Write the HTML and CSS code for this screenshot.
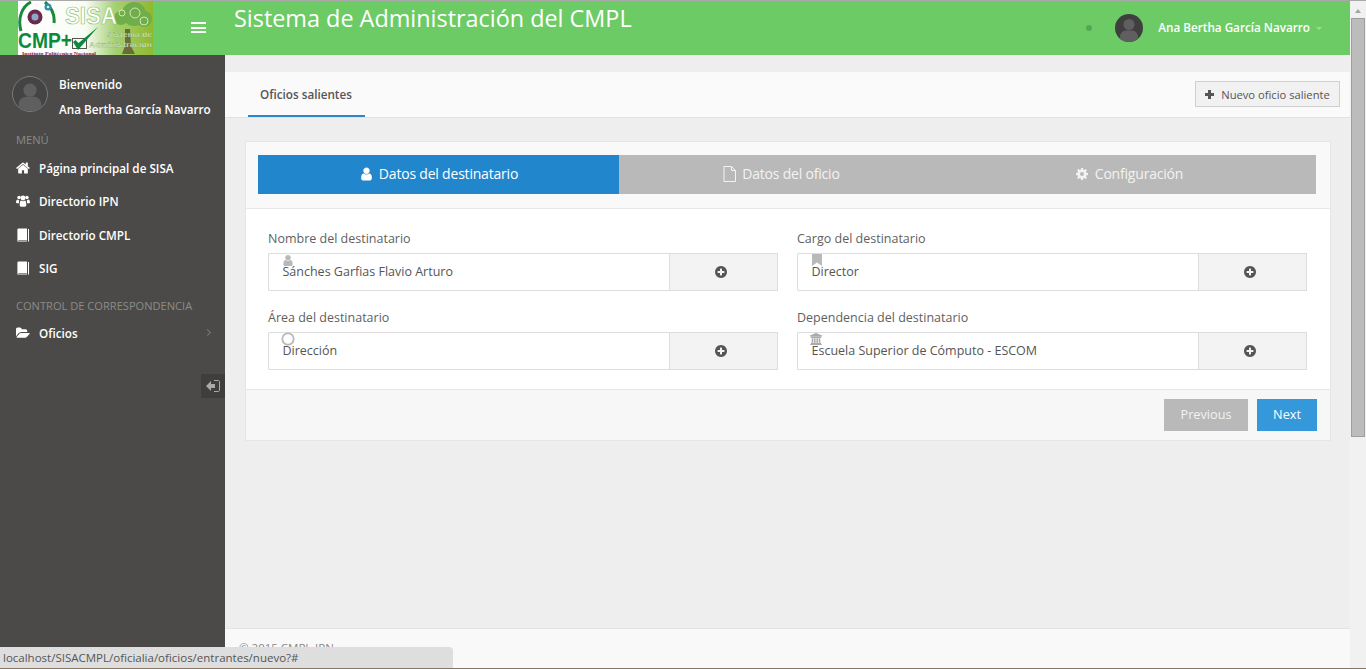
FILE: index.html
```html
<!DOCTYPE html>
<html lang="es">
<head>
<meta charset="utf-8">
<title>Sistema de Administración del CMPL</title>
<link rel="stylesheet" href="styles.css">
</head>
<body>
<svg class="defs" width="0" height="0" aria-hidden="true">
  <symbol id="i-user" viewBox="0 0 1792 1792"><path d="M1536 1399q0 109-62.500 187t-150.500 78h-854q-88 0-150.500-78t-62.500-187q0-85 8.500-160.500t31.500-152 58.500-131 94-89 134.500-34.500q131 128 313 128t313-128q76 0 134.500 34.500t94 89 58.500 131 31.500 152 8.500 160.500zm-256-887q0 159-112.500 271.500t-271.500 112.500-271.500-112.500-112.500-271.500 112.500-271.500 271.500-112.500 271.500 112.500 112.500 271.500z"/></symbol>
  <symbol id="i-home" viewBox="64 64 1664 1664"><path d="M1472 992v480q0 26-19 45t-45 19h-384v-384h-256v384h-384q-26 0-45-19t-19-45v-480q0-1 .5-3t.5-3l575-474 575 474q1 2 1 6zm223-69l-62 74q-8 9-21 11h-3q-13 0-21-7l-692-577-692 577q-12 8-24 7-13-2-21-11l-62-74q-8-10-7-23.500t11-21.500l719-599q32-26 76-26t76 26l244 204v-195q0-14 9-23t23-9h192q14 0 23 9t9 23v408l219 182q10 8 11 21.500t-7 23.500z"/></symbol>
  <symbol id="i-plusc" viewBox="0 0 1792 1792"><path d="M1344 960v-128q0-26-19-45t-45-19h-256v-256q0-26-19-45t-45-19h-128q-26 0-45 19t-19 45v256h-256q-26 0-45 19t-19 45v128q0 26 19 45t45 19h256v256q0 26 19 45t45 19h128q26 0 45-19t19-45v-256h256q26 0 45-19t19-45zm320-64q0 209-103 385.500t-279.500 279.500-385.500 103-385.500-103-279.500-279.500-103-385.500 103-385.500 279.500-279.500 385.500-103 385.500 103 279.500 279.500 103 385.500z"/></symbol>
  <symbol id="i-folder" viewBox="0 0 1920 1792"><path d="M1879 952q0 31-31 66l-336 396q-43 51-120.500 86.500t-143.500 35.500h-1088q-34 0-60.500-13t-26.500-43q0-31 31-66l336-396q43-51 120.500-86.500t143.500-35.500h1088q34 0 60.500 13t26.500 43zm-343-344v160h-832q-94 0-197 47.500t-164 119.500l-337 396-5 6q0-4-.5-12.500t-.5-12.500v-960q0-92 66-158t158-66h320q92 0 158 66t66 158v32h544q92 0 158 66t66 158z"/></symbol>
  <symbol id="i-book" viewBox="0 0 14 14"><path d="M2.500 .5H11V12H2.800C2.300 12 2 12.300 2 12.700v.8H1.400V2C1.400 1.100 1.800 .5 2.500 .5z"/><path d="M2 12.600h9v.9H2z"/><rect x="12" y="1" width="1" height="12.500"/></symbol>
  <symbol id="i-group" viewBox="0 0 16 14"><circle cx="3.500" cy="3" r="2"/><circle cx="12.500" cy="3" r="2"/><circle cx="8" cy="3.600" r="2.800"/><path d="M0 9c0-3 1-3.800 2-3.800.6.600 1 .8 1.600.9C3.400 7 3.300 8 3.500 9.500H1C.4 9.500 0 9.400 0 9zM16 9c0-3-1-3.800-2-3.800-.6.600-1 .8-1.600.9.200.9.300 1.900.1 3.400H15c.6 0 1-.1 1-.5zM4.200 11.500C4.200 8 5 6.500 5.800 6.500c1.300 1.100 3.100 1.100 4.400 0 .8 0 1.600 1.500 1.600 5 0 1.200-.8 2-1.800 2H6c-1 0-1.800-.8-1.800-2z"/></symbol>
  <symbol id="i-cog" viewBox="0 0 14 14"><path fill-rule="evenodd" d="M5.900 0h2.200l.4 1.900 1.100.5L11.300 1.300l1.400 1.400-1.100 1.700.5 1.100 1.900.4v2.200l-1.900.4-.5 1.100 1.100 1.700-1.400 1.400-1.700-1.100-1.100.5-.4 1.900H5.900l-.4-1.900-1.100-.5-1.700 1.100-1.400-1.400 1.100-1.700-.5-1.100L0 8.100V5.900l1.900-.4.5-1.100-1.100-1.700 1.400-1.400 1.700 1.100 1.100-.5zM7 4.700a2.300 2.300 0 1 0 0 4.600 2.300 2.300 0 0 0 0-4.600z"/></symbol>
  <symbol id="i-bank" viewBox="0 0 14 14"><path d="M7 0l7 3v1H0V3zM1 4.500h12v1.200H1zM2 6h1.800v5H2zM4.700 6h1.800v5H4.700zM7.500 6h1.800v5H7.500zM10.200 6H12v5h-1.800zM1 11.300h12V13H1zM0 13h14v1H0z"/></symbol>
</svg>

<div class="window">
  <div class="viewport">
    <header class="topbar">
      <div class="logo">
        <svg width="135" height="54" viewBox="0 0 135 54">
          <defs>
            <linearGradient id="lg" x1="0" x2="1" y1="0" y2="0">
              <stop offset="0" stop-color="#ffffff"/>
              <stop offset=".5" stop-color="#f8fcf5"/>
              <stop offset=".72" stop-color="#a4d072"/>
              <stop offset="1" stop-color="#8fb92e"/>
            </linearGradient>
          </defs>
          <rect width="135" height="54" fill="url(#lg)"/>
          <path d="M3 30C-1 16 5 5 13 1M36 22c1-9-3-16-9-21" fill="none" stroke="#1a8a3a" stroke-width="3"/>
          <circle cx="17" cy="16" r="7.500" fill="#6b2a4c"/>
          <circle cx="17" cy="16" r="3.500" fill="#8fa6c4"/>
          <circle cx="30" cy="6" r="3.500" fill="#2d8ea8"/>
          <circle cx="30" cy="6" r="1.300" fill="#dfeef2"/>
          <g fill="#6fae4a"><circle cx="116" cy="13" r="12"/><circle cx="126" cy="18" r="8"/><circle cx="103" cy="17" r="7"/></g>
          <g fill="none" stroke="#cfe8b6"><circle cx="117" cy="12" r="5"/><circle cx="126" cy="20" r="4"/><circle cx="104" cy="12" r="3"/></g>
          <path d="M107 28h5l1 17 4 8h-13l3-8z" fill="#6b6a3a"/>
          <text class="logo-sisa" x="47" y="23" textLength="52" lengthAdjust="spacingAndGlyphs">SISA</text>
          <text class="logo-sub" x="89" y="36" textLength="45" lengthAdjust="spacing">Sistema de</text>
          <text class="logo-sub" x="71" y="46" textLength="63" lengthAdjust="spacing">Administración</text>
          <text class="logo-cmp" x="0" y="47" textLength="54" lengthAdjust="spacingAndGlyphs">CMP+</text>
          <rect x="54.500" y="37.500" width="14" height="10" fill="none" stroke="#555"/>
          <path d="M55 41l5 8L80 26 60.500 42l-3-3z" fill="#0b8a3c"/>
          <text class="logo-ipn" x="4" y="53.500" textLength="74" lengthAdjust="spacingAndGlyphs">Instituto Politécnico Nacional</text>
        </svg>
      </div>
      <button class="burger" aria-label="Menú"><span></span><span></span><span></span></button>
      <h1 class="title">Sistema de Administración del CMPL</h1>
      <div class="top-user">
        <span class="dot"></span>
        <span class="avatar avatar-top"><svg viewBox="0 0 28 28"><circle cx="14" cy="10.500" r="5.500"/><path d="M5 28v-5c0-4 3-6.500 6-6.500h6c3 0 6 2.500 6 6.500v5z"/></svg></span>
        <span class="top-name">Ana Bertha García Navarro</span>
        <span class="caret"></span>
      </div>
    </header>

    <div class="layout">
      <aside class="sidebar">
        <div class="profile">
          <span class="avatar avatar-side"><svg viewBox="0 0 36 36"><circle cx="18" cy="14" r="7"/><path d="M6 36v-7c0-5 4-8 8-8h8c4 0 8 3 8 8v7z"/></svg></span>
          <div class="profile-text">
            <div>Bienvenido</div>
            <div>Ana Bertha García Navarro</div>
          </div>
        </div>
        <div class="nav-head nav-head-first">MENÚ</div>
        <nav class="nav">
          <a class="nav-item"><svg class="nav-ico"><use href="#i-home"/></svg>Página principal de SISA</a>
          <a class="nav-item"><svg class="nav-ico"><use href="#i-group"/></svg>Directorio IPN</a>
          <a class="nav-item"><svg class="nav-ico"><use href="#i-book"/></svg>Directorio CMPL</a>
          <a class="nav-item"><svg class="nav-ico"><use href="#i-book"/></svg>SIG</a>
        </nav>
        <div class="nav-head nav-head-second">CONTROL DE CORRESPONDENCIA</div>
        <nav class="nav nav-second">
          <a class="nav-item"><svg class="nav-ico"><use href="#i-folder"/></svg>Oficios<span class="chev"></span></a>
        </nav>
        <button class="collapse" aria-label="Contraer">
          <svg width="14" height="12" viewBox="0 0 14 12"><path d="M0 6l5-5v3h4v4H5v3z" fill="#a9a9a9"/><path d="M8 .5h4c1 0 1.500.5 1.500 1.500v8c0 1-.5 1.500-1.500 1.500H8" fill="none" stroke="#a9a9a9"/></svg>
        </button>
      </aside>

      <main class="content">
        <div class="tabs">
          <div class="tab-active">Oficios salientes</div>
          <button class="btn-new"><span class="plus"></span>Nuevo oficio saliente</button>
        </div>

        <div class="page">
          <section class="card">
            <div class="card-head">
              <div class="steps">
                <div class="step step-on"><svg class="step-ico"><use href="#i-user"/></svg>Datos del destinatario</div>
                <div class="step">
                  <svg class="step-ico" viewBox="0 0 14 16"><path d="M1.500.5h7.500l4 4v11h-11.500zM9 .5v4h4" fill="none" stroke="#f3f3f3"/></svg>Datos del oficio
                </div>
                <div class="step step-last"><svg class="step-ico step-ico-cog"><use href="#i-cog"/></svg>Configuración</div>
              </div>
            </div>

            <div class="form">
              <div class="field">
                <label class="lbl">Nombre del destinatario</label>
                <div class="group">
                  <div class="control">
                    <svg class="f-ico"><use href="#i-user"/></svg>
                    Sánches Garfias Flavio Arturo
                  </div>
                  <div class="addon"><svg class="add-ico"><use href="#i-plusc"/></svg></div>
                </div>
              </div>
              <div class="field">
                <label class="lbl">Cargo del destinatario</label>
                <div class="group">
                  <div class="control">
                    <svg class="f-ico f-ico-mark" viewBox="0 0 10 12"><path d="M0 0h10v12L5 8.500 0 12z"/></svg>
                    Director
                  </div>
                  <div class="addon"><svg class="add-ico"><use href="#i-plusc"/></svg></div>
                </div>
              </div>
              <div class="field">
                <label class="lbl">Área del destinatario</label>
                <div class="group">
                  <div class="control">
                    <svg class="f-ico f-ico-ring" viewBox="0 0 14 14"><circle cx="7" cy="7" r="5.700" fill="none" stroke="#b9b9b9" stroke-width="1.800"/></svg>
                    Dirección
                  </div>
                  <div class="addon"><svg class="add-ico"><use href="#i-plusc"/></svg></div>
                </div>
              </div>
              <div class="field">
                <label class="lbl">Dependencia del destinatario</label>
                <div class="group">
                  <div class="control">
                    <svg class="f-ico f-ico-bank"><use href="#i-bank"/></svg>
                    Escuela Superior de Cómputo - ESCOM
                  </div>
                  <div class="addon"><svg class="add-ico"><use href="#i-plusc"/></svg></div>
                </div>
              </div>
            </div>

            <div class="card-foot">
              <button class="btn btn-prev">Previous</button>
              <button class="btn btn-next">Next</button>
            </div>
          </section>
        </div>

        <footer class="foot">© 2015 CMPL-IPN</footer>
      </main>
    </div>
    <div class="status">localhost/SISACMPL/oficialia/oficios/entrantes/nuevo?#</div>
  </div>

  <div class="scrollbar">
    <span class="sb-up"></span>
    <span class="sb-thumb"></span>
  </div>
</div>
</body>
</html>
```

FILE: styles.css
```css
* { box-sizing: border-box; }
html, body { margin: 0; padding: 0; height: 100%; overflow: hidden; }
body {
  font-family: "Open Sans", "Liberation Sans", sans-serif;
  font-size: 13px;
  color: #5a5a5a;
  background: #eeeeee;
  border-top: 1px solid #a9a9a9;
  border-bottom: 1px solid #8a7560;
}
button { font-family: inherit; cursor: pointer; }
.defs { position: absolute; }

.window { display: flex; height: 100%; }
.viewport { flex: 1; min-width: 0; display: flex; flex-direction: column; position: relative; }

/* top bar */
.topbar {
  height: 54px;
  flex: none;
  background: #6dcb66;
  display: flex;
  align-items: flex-start;
  color: #fff;
}
.logo { width: 135px; height: 54px; margin-left: 18px; flex: none; }
.logo svg { display: block; }
.logo-sisa { font: 700 23px "Liberation Sans", sans-serif; fill: #ffffff; stroke: #8cc66c; stroke-width: .7; }
.logo-sub { font: 700 8px "Liberation Sans", sans-serif; fill: #dcefc8; stroke: #6f9a4c; stroke-width: .25; }
.logo-cmp { font: 700 22px "Liberation Sans", sans-serif; fill: #0b8a3c; }
.logo-ipn { font: 700 4.800px "Liberation Serif", serif; fill: #7b2450; }

.burger {
  width: 15px; height: 11px; margin: 21px 0 0 38px;
  padding: 0; border: 0; background: none;
  display: flex; flex-direction: column; justify-content: space-between;
  flex: none;
}
.burger span { display: block; height: 2px; background: #fff; }

.title {
  margin: 1px 0 0 28px;
  font-size: 23.400px;
  font-weight: 400;
  line-height: 32px;
  color: #fff;
  white-space: nowrap;
}
.top-user { margin-left: auto; display: flex; align-items: center; height: 54px; }
.dot { width: 6px; height: 6px; border-radius: 50%; background: #55a852; margin-right: 23px; }
.avatar { display: block; border-radius: 50%; overflow: hidden; background: #3f3f3f; flex: none; }
.avatar svg { display: block; width: 100%; height: 100%; fill: #5f5f5f; }
.avatar-top { width: 28px; height: 28px; }
.top-name { font-size: 11.700px; font-weight: 600; color: #fff; margin: -3px 0 0 15px; }
.caret {
  width: 0; height: 0; margin: 1px 28px 0 6px;
  border: 3px solid transparent; border-top-color: #9adf95; border-bottom: 0;
}

/* body layout */
.layout { flex: 1; display: flex; min-height: 0; }
.sidebar { width: 225px; flex: none; background: #4b4a48; position: relative; padding-top: 21px; }
.profile { display: flex; padding-left: 12px; height: 42px; }
.avatar-side { width: 36px; height: 36px; background: #444; border: 1px solid #7a7a7a; }
.profile-text { margin-left: 11px; font-size: 11.700px; font-weight: 600; color: #fff; line-height: 25px; margin-top: -4px; white-space: nowrap; }
.nav-head { font-size: 11.100px; color: #8b8a88; padding-left: 16px; line-height: 16px; white-space: nowrap; }
.nav-head-first { margin-top: 14px; }
.nav-head-second { margin-top: 12.600px; }
.nav { margin-top: 3.400px; }
.nav-second { margin-top: 2.400px; }
.nav-item {
  display: flex; align-items: center;
  height: 33.400px;
  padding-left: 16px;
  font-size: 11.700px; font-weight: 600; color: #fff;
  white-space: nowrap;
}
.nav-ico { width: 14px; height: 14px; fill: #fff; margin-right: 9px; flex: none; }
.chev {
  width: 5px; height: 5px; margin-left: auto; margin-right: 15px;
  border-top: 1px solid #777; border-right: 1px solid #777;
  transform: rotate(45deg);
}
.collapse {
  position: absolute; right: 0; top: 319px;
  width: 24px; height: 24px; padding: 0; border: 0;
  background: #3f3e3c;
  display: flex; align-items: center; justify-content: center;
}

/* content */
.content { flex: 1; min-width: 0; display: flex; flex-direction: column; }
.tabs {
  margin-top: 17px;
  height: 46px;
  flex: none;
  background: #fafafa;
  border-bottom: 1px solid #e3e3e3;
  display: flex;
  align-items: flex-start;
  justify-content: space-between;
  padding: 0 10px 0 23px;
}
.tab-active {
  height: 45px; width: 117px;
  padding-right: 1px;
  text-align: center;
  font-size: 11.700px; font-weight: 600; color: #555;
  line-height: 44px;
  border-bottom: 2px solid #2b86cc;
  white-space: nowrap;
}
.btn-new {
  margin-top: 9px;
  width: 145px; height: 26px;
  padding: 0;
  border: 1px solid #cfcfcf;
  background: #f1f1f1;
  font-size: 11.200px; color: #555;
  display: flex; align-items: center; justify-content: center;
  white-space: nowrap;
}
.plus { width: 9px; height: 9px; margin-right: 7px; background:
  linear-gradient(#555,#555) center / 9px 3px no-repeat,
  linear-gradient(#555,#555) center / 3px 9px no-repeat; }

.page { flex: 1; min-height: 0; padding: 23px 20px 0; }
.card { border: 1px solid #e6e6e6; background: #fff; width: 1086px; }
.card-head { background: #f9f9f9; padding: 13px 14px 14px 12px; border-bottom: 1px solid #e6e6e6; }
.steps { display: grid; grid-template-columns: 361px 324px 373px; height: 39px; background: #b9b9b9; }
.step {
  display: flex; align-items: center; justify-content: center;
  font-size: 14px; color: #f3f3f3; letter-spacing: -.2px; white-space: nowrap;
  padding-bottom: 2px;
}
.step-on { background: #2286cc; color: #fff; }
.step-ico { width: 15px; height: 16px; fill: currentColor; margin-right: 5px; flex: none; }
.step-ico-cog { width: 12px; height: 12px; margin-right: 7px; }

.form {
  display: grid;
  grid-template-columns: 510px 510px;
  column-gap: 19px;
  row-gap: 18px;
  padding: 21px 22px 0;
  height: 180px;
  align-content: start;
  background: #fff;
}
.lbl { display: block; font-size: 12.500px; color: #5f5f5f; line-height: 17px; margin-bottom: 6px; white-space: nowrap; }
.group { display: flex; height: 38px; }
.control {
  flex: 1; min-width: 0;
  position: relative;
  border: 1px solid #dddddd; border-right: 0;
  border-radius: 2px 0 0 2px;
  padding-left: 13.500px;
  display: flex; align-items: center;
  font-size: 12.500px; color: #555;
  padding-bottom: 2px;
  white-space: nowrap;
}
.f-ico { position: absolute; left: 12px; top: 0; width: 14px; height: 13px; fill: #b9b9b9; }
.f-ico-mark { left: 14px; width: 10px; height: 12px; fill: #b9b9b9; }
.f-ico-ring { left: 12px; top: -1px; width: 14px; height: 14px; }
.f-ico-bank { left: 11px; top: 0; width: 14px; height: 12px; fill: #aaaaaa; }
.addon {
  width: 109px; flex: none;
  border: 1px solid #dddddd;
  background: #f3f3f3;
  display: flex; align-items: center; justify-content: center;
  padding-right: 5px;
}
.add-ico { width: 14px; height: 14px; fill: #555; }

.card-foot {
  border-top: 1px solid #e6e6e6;
  background: #f7f7f7;
  height: 51px;
  display: flex; justify-content: flex-end; gap: 9px;
  padding: 9px 13px 0 0;
}
.btn { height: 32px; border: 0; color: #fff; font-size: 12.700px; padding: 0 0 2px; }
.btn-prev { width: 84px; background: #b9b9b9; color: #f3f3f3; }
.btn-next { width: 60px; background: #3498db; }

.foot {
  height: 40px; flex: none;
  background: #f9f9f9;
  border-top: 1px solid #e3e3e3;
  padding: 11px 0 0 14px;
  font-size: 11.500px; color: #888;
}

.status {
  position: absolute; left: 0; bottom: 0;
  width: 453px; height: 21px;
  background: #dedede;
  border-top-right-radius: 4px;
  font-size: 11.500px; line-height: 21px; color: #555;
  padding-left: 3px;
  white-space: nowrap;
}

/* scrollbar */
.scrollbar { width: 16px; flex: none; background: #f1f1f1; position: relative; padding: 17px 1px 0; }
.sb-up {
  position: absolute; left: 5px; top: 8px;
  width: 0; height: 0;
  border: 3px solid transparent; border-bottom: 4px solid #a3a3a3; border-top: 0;
}
.sb-thumb { display: block; height: 419px; background: #bcbcbc; border: 1px solid #9e9e9e; }
```
